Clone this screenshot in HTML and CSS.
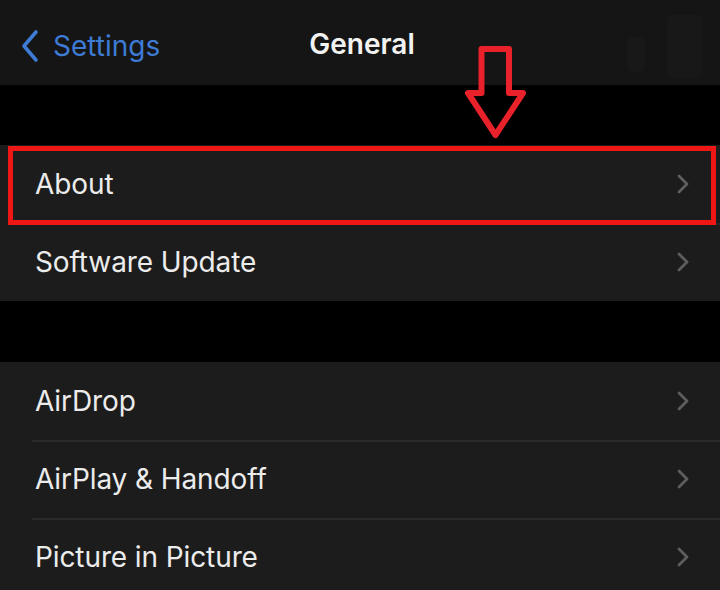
FILE: index.html
```html
<!DOCTYPE html>
<html>
<head>
<meta charset="utf-8">
<link rel="stylesheet" href="styles.css">
</head>
<body>
<div class="screen">
  <header class="nav">
    <div class="back">
      <svg class="back-chev" width="20" height="34" viewBox="0 0 20 34"><path d="M16 3 L4 17 L16 31" fill="none" stroke="#3d7bd4" stroke-width="3.6" stroke-linecap="round" stroke-linejoin="round"/></svg>
      <span class="back-label">Settings</span>
    </div>
    <div class="title">General</div>
    <div class="status">
      <span class="ghost ghost-small"></span>
      <span class="ghost ghost-big"></span>
    </div>
    <svg class="arrow" width="70" height="104" viewBox="0 0 70 104"><path d="M19.5 7 H47 V51 H61 L33.5 93 L6 51 H19.5 Z" fill="none" stroke="#e8212b" stroke-width="6" stroke-linejoin="round"/></svg>
  </header>

  <div class="gap-top"></div>

  <section class="group">
    <div class="row row-highlight">
      <span class="label">About</span>
      <svg class="chev" width="12" height="20" viewBox="0 0 12 20"><path d="M2 2 L10 10 L2 18" fill="none" stroke="#5e5e60" stroke-width="2.8" stroke-linecap="round" stroke-linejoin="round"/></svg>
      <div class="highlight"></div>
    </div>
    <div class="row">
      <span class="label">Software Update</span>
      <svg class="chev" width="12" height="20" viewBox="0 0 12 20"><path d="M2 2 L10 10 L2 18" fill="none" stroke="#5e5e60" stroke-width="2.8" stroke-linecap="round" stroke-linejoin="round"/></svg>
    </div>
  </section>

  <div class="gap-mid"></div>

  <section class="group">
    <div class="row">
      <span class="label">AirDrop</span>
      <svg class="chev" width="12" height="20" viewBox="0 0 12 20"><path d="M2 2 L10 10 L2 18" fill="none" stroke="#5e5e60" stroke-width="2.8" stroke-linecap="round" stroke-linejoin="round"/></svg>
    </div>
    <div class="row">
      <span class="label">AirPlay &amp; Handoff</span>
      <svg class="chev" width="12" height="20" viewBox="0 0 12 20"><path d="M2 2 L10 10 L2 18" fill="none" stroke="#5e5e60" stroke-width="2.8" stroke-linecap="round" stroke-linejoin="round"/></svg>
    </div>
    <div class="row">
      <span class="label">Picture in Picture</span>
      <svg class="chev" width="12" height="20" viewBox="0 0 12 20"><path d="M2 2 L10 10 L2 18" fill="none" stroke="#5e5e60" stroke-width="2.8" stroke-linecap="round" stroke-linejoin="round"/></svg>
    </div>
  </section>
</div>
</body>
</html>
```

FILE: styles.css
```css
html, body {
  margin: 0;
  padding: 0;
  background: #000;
}

.screen {
  width: 720px;
  height: 590px;
  overflow: hidden;
  background: #000;
  font-family: Inter, "Liberation Sans", Arial, sans-serif;
  color: #e9e9e9;
}

.nav {
  position: relative;
  height: 85px;
  background: #151515;
  display: flex;
  align-items: center;
  justify-content: center;
}

.back {
  position: absolute;
  left: 20px;
  top: 29px;
  display: flex;
  align-items: center;
  gap: 13px;
}

.back-label {
  font-size: 28px;
  color: #3d7bd4;
  line-height: 34px;
}

.title {
  font-size: 28px;
  font-weight: 600;
  color: #f2f2f2;
  margin-left: 4px;
  margin-top: 2px;
}

.status {
  position: absolute;
  right: 18px;
  top: 15px;
  display: flex;
  align-items: flex-end;
  gap: 22px;
}

.ghost {
  display: block;
  background: #181818;
  border-radius: 5px;
}

.ghost-small {
  width: 18px;
  height: 35px;
  margin-bottom: 6px;
}

.ghost-big {
  width: 35px;
  height: 63px;
}

.arrow {
  position: absolute;
  left: 462px;
  top: 42px;
}

.gap-top {
  height: 60px;
}

.gap-mid {
  height: 61px;
}

.group {
  background: #1c1c1c;
}

.row {
  position: relative;
  height: 78px;
  display: flex;
  align-items: center;
  justify-content: space-between;
  padding: 0 31px 0 35px;
  box-sizing: border-box;
}

.row + .row::before {
  content: "";
  position: absolute;
  left: 32px;
  right: 0;
  top: 0;
  height: 2px;
  background: #2a2a2a;
}

.label {
  font-size: 28px;
  color: #ececec;
  letter-spacing: -0.1px;
}

.chev {
  display: block;
}

.highlight {
  position: absolute;
  left: 8px;
  right: 4px;
  top: 1px;
  bottom: -2px;
  border: 5px solid #ef1616;
  box-sizing: border-box;
  z-index: 2;
}
```
